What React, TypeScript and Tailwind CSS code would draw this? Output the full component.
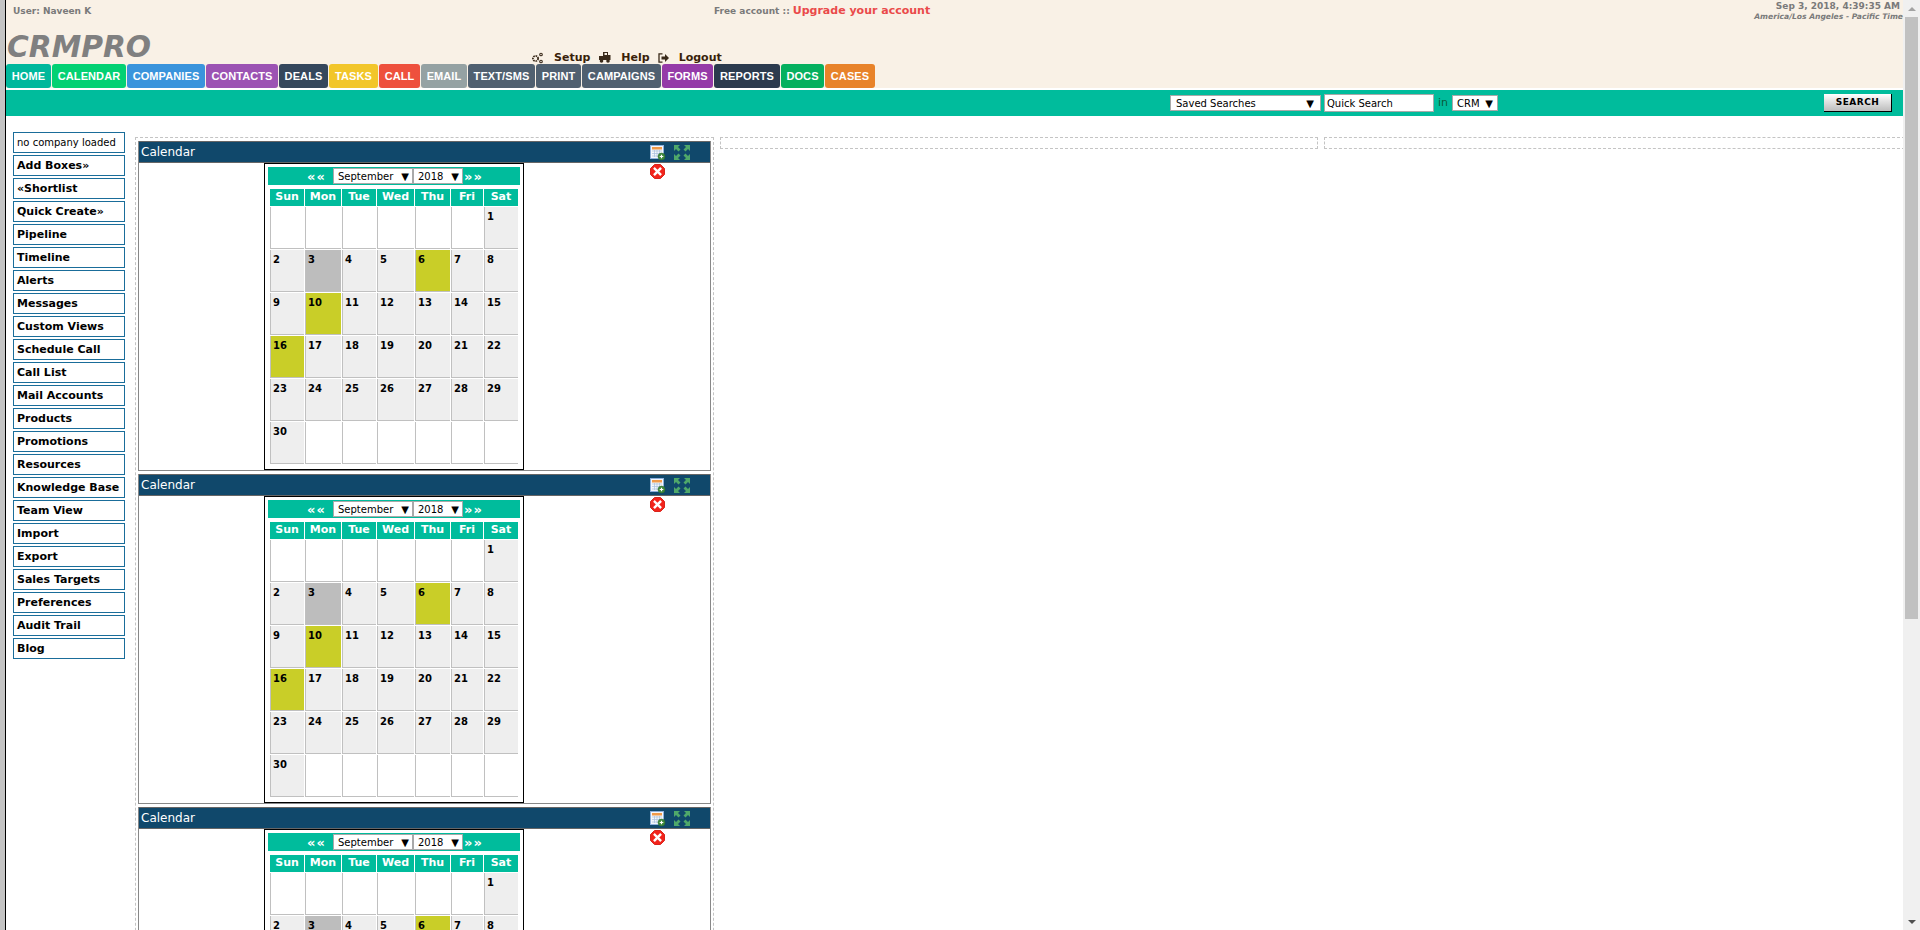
import React from "react";

const font = "font-['DejaVu_Sans',sans-serif]";

const tabs: [string, string, string][] = [
  ["HOME", "bg-[#00b89c]", "w-[45px]"],
  ["CALENDAR", "bg-[#03d173]", "w-[74px]"],
  ["COMPANIES", "bg-[#3a94dc]", "w-[78px]"],
  ["CONTACTS", "bg-[#9c53b3]", "w-[72px]"],
  ["DEALS", "bg-[#35475c]", "w-[49px]"],
  ["TASKS", "bg-[#f2c62a]", "w-[49px]"],
  ["CALL", "bg-[#ee503d]", "w-[41px]"],
  ["EMAIL", "bg-[#95a2a3]", "w-[46px]"],
  ["TEXT/SMS", "bg-[#506070]", "w-[67px]"],
  ["PRINT", "bg-[#506070]", "w-[45px]"],
  ["CAMPAIGNS", "bg-[#506070]", "w-[79px]"],
  ["FORMS", "bg-[#953aa8]", "w-[51px]"],
  ["REPORTS", "bg-[#2c3b4e]", "w-[66px]"],
  ["DOCS", "bg-[#05b05f]", "w-[43px]"],
  ["CASES", "bg-[#e8832a]", "w-[50px]"],
];

const side = [
  "Add Boxes»", "«Shortlist", "Quick Create»", "Pipeline", "Timeline", "Alerts", "Messages",
  "Custom Views", "Schedule Call", "Call List", "Mail Accounts", "Products", "Promotions",
  "Resources", "Knowledge Base", "Team View", "Import", "Export", "Sales Targets",
  "Preferences", "Audit Trail", "Blog",
];

const days = ["Sun", "Mon", "Tue", "Wed", "Thu", "Fri", "Sat"];

const cells: (number | null)[] = [
  null, null, null, null, null, null, 1,
  2, 3, 4, 5, 6, 7, 8,
  9, 10, 11, 12, 13, 14, 15,
  16, 17, 18, 19, 20, 21, 22,
  23, 24, 25, 26, 27, 28, 29,
  30, null, null, null, null, null, null,
];

function cellBg(d: number | null) {
  if (d === null) return "bg-white";
  if (d === 3) return "bg-[#bdbdbd]";
  if (d === 6 || d === 10 || d === 16) return "bg-[#c9ce28]";
  return "bg-[#eeeeee]";
}

function Arrow() {
  return <span className="text-[10px] leading-none text-black">▼</span>;
}

function CalIcon() {
  return (
    <svg width="16" height="16" viewBox="0 0 16 16" className="block">
      <rect x="0.5" y="0.5" width="13" height="13" fill="#f4f7fb" stroke="#8fb0dc" />
      <rect x="2" y="2" width="10" height="2.5" fill="#f09a4a" />
      <path d="M2 6h10M2 8.5h10M2 11h10M4.5 5v7M7 5v7M9.5 5v7" stroke="#a8bedc" strokeWidth="0.7" />
      <circle cx="11.5" cy="11.5" r="3.5" fill="#3f8a3c" stroke="#2c6a2a" strokeWidth="0.5" />
      <path d="M9.7 11.5h3.6M11.5 9.7v3.6" stroke="#fff" strokeWidth="1.2" />
    </svg>
  );
}

function ExpandIcon() {
  return (
    <svg width="18" height="17" viewBox="0 0 18 17" className="block">
      <g fill="#4fa86a">
        <path d="M1 1h6L5 3l2.5 2.5-2 2L3 5 1 7z" />
        <path d="M17 1v6l-2-2-2.5 2.5-2-2L13 3l-2-2z" />
        <path d="M1 16v-6l2 2 2.5-2.5 2 2L5 14l2 2z" />
        <path d="M17 16h-6l2-2-2.5-2.5 2-2L15 12l2-2z" />
      </g>
    </svg>
  );
}

function CloseIcon() {
  return (
    <svg width="15" height="15" viewBox="0 0 15 15" className="block">
      <path d="M4.5 0.5h6l4 4v6l-4 4h-6l-4-4v-6z" fill="#f2241c" stroke="#d9251c" />
      <path d="M4.8 4.8l5.4 5.4M10.2 4.8l-5.4 5.4" stroke="#fff" strokeWidth="2.4" strokeLinecap="square" />
    </svg>
  );
}

function GearIcon() {
  return (
    <svg width="12" height="12" viewBox="0 0 12 12" className="block">
      <g fill="none" stroke="#3a2a1a">
        <circle cx="4.5" cy="6.5" r="2.6" strokeWidth="1.8" strokeDasharray="1.6 0.8" />
        <circle cx="10" cy="2.5" r="1.3" strokeWidth="1.1" />
        <circle cx="10" cy="9.5" r="1.3" strokeWidth="1.1" />
      </g>
    </svg>
  );
}

function HelpIcon() {
  return (
    <svg width="12" height="11" viewBox="0 0 12 11" className="block">
      <path d="M4 0h5v3h2.5v5H0V4h4z" fill="#3a2a1a" />
      <rect x="5.5" y="1" width="2.5" height="2" fill="#f9f1e6" />
      <circle cx="2.5" cy="9" r="1.8" fill="#3a2a1a" />
      <circle cx="9" cy="9" r="1.8" fill="#3a2a1a" />
    </svg>
  );
}

function LogoutIcon() {
  return (
    <svg width="11" height="10" viewBox="0 0 11 10" className="block">
      <path d="M4.5 0.8H1v8.4h3.5" fill="none" stroke="#3a2a1a" strokeWidth="1.3" />
      <path d="M3.5 3.5H7V1l4 4-4 4V6.5H3.5z" fill="#3a2a1a" />
    </svg>
  );
}

function Calendar() {
  return (
    <div className="ml-[125px] h-[307px] w-[260px] shrink-0 border border-black px-[3px] pt-[3px]">
      <div className="flex h-[18px] w-[252px] items-center bg-[#00bc9c] pl-[39px]">
        <span className="w-[26px] text-[13px] font-bold leading-none tracking-[1px] text-white">««</span>
        <span className="flex h-[16px] w-[80px] items-center justify-between border border-[#a9a9a9] bg-white pl-[4px] pr-[3px] pt-[1px] text-[10px] leading-none text-black">
          September
          <Arrow />
        </span>
        <span className="flex h-[16px] w-[50px] items-center justify-between border border-[#a9a9a9] bg-white pl-[4px] pr-[3px] pt-[1px] text-[10px] leading-none text-black">
          2018
          <Arrow />
        </span>
        <span className="ml-[1px] text-[13px] font-bold leading-none tracking-[1px] text-white">»»</span>
      </div>
      <div className="ml-[2px] mt-[4px] grid w-[248px] grid-cols-[34px_36px_34px_37px_35px_32px_34px] grid-rows-[17px_repeat(6,42px)] gap-px">
        {days.map((d) => (
          <div key={d} className="flex items-center justify-center bg-[#00bc9c] text-[11px] font-bold text-white">
            {d}
          </div>
        ))}
        {cells.map((d, i) => (
          <div
            key={i}
            className={`border-b border-l border-[#c0c0c0] pl-[2px] pt-[3px] text-[10px] font-bold leading-[14px] text-black ${cellBg(d)}`}
          >
            {d}
          </div>
        ))}
      </div>
    </div>
  );
}

function Panel() {
  return (
    <div className="relative mb-[3px] h-[330px] border border-t-0 border-[#888888]">
      <div className="flex h-[22px] items-center border-y border-t-[#666666] border-b-[#666666] bg-[#10486b] pl-[2px] text-[12px] leading-none text-white">
        Calendar
      </div>
      <Calendar />
      <div className="absolute left-[511px] top-[4px]">
        <CalIcon />
      </div>
      <div className="absolute left-[534px] top-[3px]">
        <ExpandIcon />
      </div>
      <div className="absolute left-[511px] top-[23px]">
        <CloseIcon />
      </div>
    </div>
  );
}

export default function App() {
  return (
    <div className={`flex h-[930px] w-[1920px] overflow-hidden bg-white ${font}`}>
      <div className="h-full w-[5px] shrink-0 bg-[#c4c4c4]" />
      <div className="h-full w-px shrink-0 bg-black" />
      <div className="flex h-full min-w-0 flex-1 flex-col">
        <header className="relative h-[88px] shrink-0 bg-[#f9f1e6]">
          <div className="flex h-[24px] items-start justify-between">
            <span className="pl-[7px] pt-[5px] text-[9px] font-bold leading-[12px] text-[#7a7a7a]">User: Naveen K</span>
            <div className="absolute left-[708px] top-[4px] flex items-baseline gap-[3px] leading-[14px]">
              <span className="text-[9px] font-bold text-[#7a7a7a]">Free account ::</span>
              <span className="text-[11px] font-bold text-[#ea4a4a]">Upgrade your account</span>
            </div>
            <div className="flex flex-col items-end pr-0 text-[#7a7a7a]">
              <span className="pr-[3px] text-[9px] font-bold leading-[12px]">Sep 3, 2018, 4:39:35 AM</span>
              <span className="text-[7.6px] font-bold italic leading-[9px]">America/Los Angeles - Pacific Time</span>
            </div>
          </div>
          <div className="absolute left-[1px] top-[28px] text-[29.7px] font-bold italic leading-[37px] text-[#808080]">CRMPRO</div>
          <div className="absolute left-[525px] top-[51px] flex items-center text-[11px] font-bold leading-[13px] text-[#3a1f0a]">
            <GearIcon />
            <span className="ml-[11px]">Setup</span>
            <span className="ml-[9px]"><HelpIcon /></span>
            <span className="ml-[10px]">Help</span>
            <span className="ml-[8px]"><LogoutIcon /></span>
            <span className="ml-[10px]">Logout</span>
          </div>
          <nav className="absolute bottom-0 left-0 flex gap-px font-['Liberation_Sans',sans-serif]">
            {tabs.map(([label, bg, w]) => (
              <div
                key={label}
                className={`flex h-[24px] items-center justify-center rounded-[3px] text-[11px] font-bold tracking-[0.1px] text-white ${bg} ${w}`}
              >
                {label}
              </div>
            ))}
          </nav>
        </header>
        <div className="mt-[2px] flex h-[26px] shrink-0 items-center bg-[#00bc9c] pl-[1164px] text-[10px] text-black">
          <span className="flex h-[16px] w-[151px] items-center justify-between border border-[#a9a9a9] bg-white pl-[5px] pr-[6px] pt-[1px] leading-none">
            Saved Searches
            <Arrow />
          </span>
          <span className="ml-[3px] flex h-[18px] w-[110px] items-center border border-[#a9a9a9] bg-white pl-[2px] pt-[1px] leading-none">
            Quick Search
          </span>
          <span className="ml-[4px] pt-[1px] text-[11px] text-[#0a5a3a]">in</span>
          <span className="ml-[4px] flex h-[16px] w-[46px] items-center justify-between border border-[#a9a9a9] bg-white pl-[4px] pr-[4px] pt-[1px] leading-none">
            CRM
            <Arrow />
          </span>
          <span className="ml-[326px] flex h-[18px] w-[68px] items-center justify-center border-b border-r border-b-black border-r-black bg-gradient-to-b from-white to-[#bdbdbd] text-[9px] font-bold tracking-[0.5px]">
            SEARCH
          </span>
        </div>
        <div className="flex min-h-0 flex-1 pl-[7px] pt-[16px]">
          <aside className="w-[112px] shrink-0 pt-0">
            <div className="mb-[2px] flex h-[21px] items-center border border-[#1a6d9a] pl-[3px] text-[10px] leading-none text-black">no company loaded</div>
            {side.map((s) => (
              <div key={s} className="mb-[2px] flex h-[21px] items-center border border-[#1a6d9a] pl-[3px] text-[11px] font-bold leading-none text-black">
                {s}
              </div>
            ))}
          </aside>
          <div className="ml-[10px] flex min-w-0 flex-1 gap-[6px] pt-[5px]">
            <div className="w-[579px] shrink-0 self-start border border-dashed border-[#c4c4c4] px-[2px] pt-[3px]">
              <Panel />
              <Panel />
              <Panel />
            </div>
            <div className="h-[12px] w-[598px] shrink-0 border border-dashed border-[#c4c4c4]" />
            <div className="h-[12px] w-[581px] shrink-0 border border-dashed border-[#c4c4c4]" />
          </div>
        </div>
      </div>
      <div className="flex h-full w-[17px] shrink-0 flex-col bg-[#f0f0f0]">
        <div className="flex h-[17px] shrink-0 items-center justify-center">
          <div className="h-0 w-0 border-x-[4px] border-b-[4px] border-x-transparent border-b-[#a3a3a3]" />
        </div>
        <div className="ml-[2px] h-[602px] w-[13px] shrink-0 bg-[#c1c1c1]" />
        <div className="flex-1" />
        <div className="flex h-[17px] shrink-0 items-center justify-center">
          <div className="h-0 w-0 border-x-[4px] border-t-[4px] border-x-transparent border-t-[#505050]" />
        </div>
      </div>
    </div>
  );
}
